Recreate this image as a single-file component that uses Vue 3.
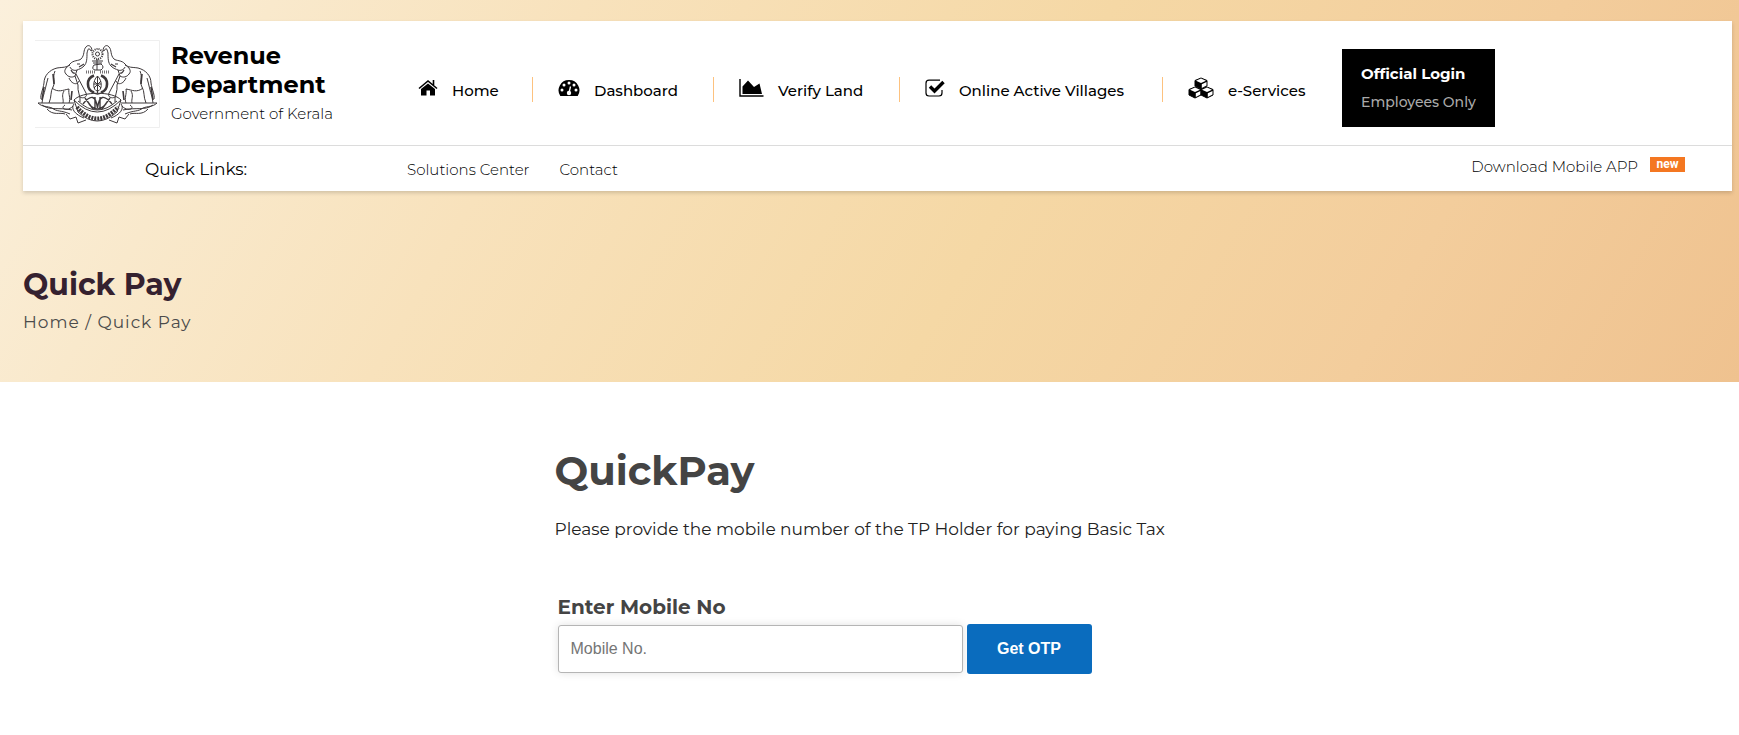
<script setup>
const navItems = [
  { icon: 'home', label: 'Home' },
  { icon: 'dashboard', label: 'Dashboard' },
  { icon: 'land', label: 'Verify Land' },
  { icon: 'villages', label: 'Online Active Villages' },
  { icon: 'services', label: 'e-Services' },
];
</script>

<template>
  <section class="hero">
    <header class="card">
      <div class="top">
        <a class="brand" href="#">
          <svg class="emblem" viewBox="0 0 125 88" fill="none" stroke="#3d383a" aria-hidden="true">
            <path d="M0 .5H124.500V87.500H0" stroke="#efefef" />
            <g id="elephant" stroke-width="1">
              <path d="M57 11C57 6 53 4 51 7C48 10 50 15 46 19C44 21 38 20 35 24C32 28 28 27 22 28C14 30 9 36 9 43C8 50 5 55 6 59M13 38C11 45 10 51 8 57L7 63" />
              <path d="M57 11L55 10C54 7 53 9 52 13C52 18 52 23 49 26C46 29 44 29 42 30L40 36C37 38 33 37 31 34C28 31 31 27 35 25M42 30C40 31 36 30 35 27" />
              <path d="M20 31C17 38 21 41 18 47C15 52 17 56 14 63M17 48C23 53 28 50 34 49C33 54 36 58 34 63M40 36L43 45C42 51 46 57 45 62M29 51C26 56 29 59 28 63M41 34L51 53C53 57 48 59 45 57M34 38C37 45 43 45 44 41" />
              <path d="M42 24h3M44 27l5-3M36 30q2 4 4 3" stroke-width="1.200" />
              <path d="M3 63H39M3 63C7 67 12 66 17 68C22 72 26 70 35 74M7 65C15 71 24 67 37 70M12 69C18 76 25 72 30 74M30 65C24 69 33 72 38 66M31 74L35 79L41 77L43 83L51 80M39 64C35 69 41 75 49 78" />
              <path d="M9 47L7 60M18 34L19 44M36 60L37 51" stroke-width="1.600" />
            </g>
            <use href="#elephant" transform="translate(125 0) scale(-1 1)" />
            <circle cx="62.500" cy="14" r="5" stroke-width="2" stroke-dasharray="1 1" />
            <circle cx="62.500" cy="14" r="2" />
            <path d="M57 21H68M58 23H67M59 25Q56 29 60 30H66Q70 27 66 24ZM62 19V30" />
            <path d="M51 32H61M65 32H75" stroke-width="3" stroke-dasharray="1 1" opacity=".7" />
            <path d="M59 35.500A9 9 0 0 0 59 52.500M66 35.500A9 9 0 0 1 66 52.500" stroke-width="2.600" />
            <path d="M59 53Q62.500 55 66 53" stroke-width="1.400" />
            <path d="M62.500 36C57 41 58 51 62.500 51C67 51 68 41 62.500 36V53M59 44H66M59 48L66 41M59 41L66 48" />
            <path d="M39 60C47 51 78 51 86 60M39 60Q62 84 86 60L82 72Q62 90 43 72ZM43 61Q62 79 82 61" />
            <path d="M42 67Q62 90 83 67" stroke-width="4" stroke-dasharray="2 1" />
            <path d="M48 64Q60 49 62.500 68Q65 49 77 64M54 64Q62 74 71 64M60 57V68M65 57V68M50 58L58 69M75 58L67 69" stroke-width="1.400" />
          </svg>
          <span class="brand-text">
            <strong>Revenue<br />Department</strong>
            <span>Government of Kerala</span>
          </span>
        </a>

        <nav class="nav" aria-label="Main">
          <a v-for="item in navItems" :key="item.icon" class="nav-item" href="#">
            <svg v-if="item.icon === 'home'" class="icon" viewBox="0 0 20 18" aria-hidden="true">
              <path d="M10 4.500L17 10V16.500H12V11.500H8.500V16.500H3V10Z" />
              <path d="M1 9.500L10 2L19 9.500M15.500 1V6" fill="none" stroke="#000" stroke-width="1.600" />
            </svg>
            <svg v-else-if="item.icon === 'dashboard'" class="icon" viewBox="0 0 22 18" aria-hidden="true">
              <path d="M11 1A10.300 10.300 0 0 0 2.300 17H19.700A10.300 10.300 0 0 0 11 1Z" />
              <g fill="#fff">
                <circle cx="11" cy="4" r="1.500" />
                <circle cx="6" cy="6" r="1.500" />
                <circle cx="16" cy="6" r="1.500" />
                <circle cx="4" cy="11" r="1.500" />
                <circle cx="18" cy="11" r="1.500" />
                <circle cx="11" cy="14" r="2.200" />
              </g>
              <path d="M11 14L12.500 7.500" stroke="#fff" stroke-width="1.300" />
            </svg>
            <svg v-else-if="item.icon === 'land'" class="icon" viewBox="0 0 25 18" aria-hidden="true">
              <path d="M1 0V17H24.500" fill="none" stroke="#000" stroke-width="1.400" />
              <path d="M3.500 15V7.500L9 1.500L15 8L20.500 4.500L23 15Z" />
            </svg>
            <svg v-else-if="item.icon === 'villages'" class="icon" viewBox="0 0 20 18" aria-hidden="true">
              <path d="M15 1.200H4A3 3 0 0 0 1 4.200V14A3 3 0 0 0 4 17H14A3 3 0 0 0 17 14V11" fill="none" stroke="#000" stroke-width="1.200" />
              <path d="M5 7.500L9.500 12L18.500 3" fill="none" stroke="#000" stroke-width="3.400" />
            </svg>
            <svg v-else class="icon icon-cubes" viewBox="0 0 26 22" aria-hidden="true">
              <g id="cube">
                <path d="M13 1L19 3.500V9L13 12L7 9V3.500Z" stroke="#000" />
                <path d="M13 1.500L18 3.700L13 6L8 3.700ZM13.800 7.300L18.500 5V8.600L13.800 11Z" fill="#fff" />
              </g>
              <use href="#cube" transform="translate(-6 9)" />
              <use href="#cube" transform="translate(6 9)" />
            </svg>
            <span>{{ item.label }}</span>
          </a>
        </nav>

        <a class="login" href="#">
          <strong>Official Login</strong>
          <span>Employees Only</span>
        </a>
      </div>

      <div class="quick">
        <span class="quick-title">Quick Links:</span>
        <nav class="quick-links" aria-label="Quick links">
          <a href="#">Solutions Center</a>
          <a href="#">Contact</a>
        </nav>
        <a class="download" href="#">
          Download Mobile APP
          <span class="badge">new</span>
        </a>
      </div>
    </header>

    <div class="heading">
      <h1>Quick Pay</h1>
      <p><a href="#">Home</a> / Quick Pay</p>
    </div>
  </section>

  <main class="content">
    <h2>QuickPay</h2>
    <p>Please provide the mobile number of the TP Holder for paying Basic Tax</p>
    <form class="form" @submit.prevent>
      <label for="mobile">Enter Mobile No</label>
      <div class="row">
        <input id="mobile" type="tel" placeholder="Mobile No." />
        <button type="submit">Get OTP</button>
      </div>
    </form>
  </main>
</template>

<style>
body {
  margin: 0;
  background: #fff;
}
</style>

<style scoped>
.hero,
.content {
  font-family: Montserrat, Inter, "Open Sans", sans-serif;
}
.hero,
.hero *,
.content * {
  box-sizing: border-box;
}
a {
  color: inherit;
  text-decoration: none;
}
.hero {
  padding: 21px 7px 48px 23px;
  background: linear-gradient(120deg, #fbf0dc 0%, #f9e9cc 14%, #f8e2bc 30%, #f5d8a5 57%, #f3cd9c 80%, #efc28f 100%);
}
.card {
  background: #fff;
  box-shadow: 0 2px 4px rgba(0, 0, 0, 0.16);
}
.top {
  display: flex;
  align-items: center;
  height: 124px;
  padding: 2px 0 0 12px;
}
.brand {
  display: flex;
  flex: 0 0 383px;
  gap: 11px;
  color: #000;
}
.emblem {
  width: 125px;
  height: 88px;
}
.brand-text {
  display: flex;
  flex-direction: column;
  padding-top: 1px;
  font-size: 15px;
  font-weight: 300;
  line-height: 29px;
}
.brand-text strong {
  font-size: 24px;
  font-weight: 700;
  line-height: 29px;
}
.nav {
  display: grid;
  grid-template-columns: 114px 181px 186px 263px 180px;
  padding-top: 10px;
}
.nav-item {
  display: flex;
  align-items: center;
  height: 25px;
  padding-top: 2px;
  gap: 14px;
  color: #000;
  font-size: 15px;
  font-weight: 500;
  white-space: nowrap;
}
.nav-item + .nav-item {
  padding-left: 25px;
  border-left: 1px solid #fdc27f;
}
.icon {
  height: 18px;
  margin-bottom: 4px;
}
.icon-cubes {
  height: 22px;
}
.login {
  display: flex;
  flex-direction: column;
  margin-top: 8px;
  padding: 10px 19px;
  background: #000;
  color: #aaa;
  font-size: 14px;
  font-weight: 500;
  line-height: 29px;
  white-space: nowrap;
}
.login strong {
  color: #fff;
  font-size: 15px;
  font-weight: 700;
}
.quick {
  display: flex;
  align-items: center;
  height: 46px;
  padding: 0 47px 0 122px;
  border-top: 1px solid #dcdcdc;
  color: #000;
  font-size: 15px;
}
.quick-title {
  flex: 0 0 262px;
  font-size: 17px;
}
.quick-links {
  display: flex;
  flex: 1;
  gap: 30px;
  padding-top: 2px;
  font-weight: 300;
}
.download {
  display: flex;
  align-items: center;
  gap: 12px;
  padding-bottom: 4px;
  font-weight: 300;
}
.badge {
  width: 35px;
  height: 15px;
  margin-bottom: 4px;
  background: #f47721;
  color: #fff;
  font: 700 12px/14px Roboto, "Liberation Sans", sans-serif;
  text-align: center;
}
.heading {
  padding-top: 74px;
}
.heading h1 {
  margin: 0;
  color: #35212f;
  font-size: 30px;
  font-weight: 700;
  line-height: 40px;
}
.heading p {
  margin: 0;
  padding-top: 5px;
  color: #4b4b4b;
  font-size: 17px;
  letter-spacing: 1px;
  line-height: 24px;
}
.content {
  width: 630px;
  margin: 0 auto;
  padding: 64px 0 60px;
}
.content h2 {
  margin: 0;
  color: #444;
  font-size: 40px;
  font-weight: 700;
  line-height: 50px;
}
.content p {
  margin: 21px 0 0;
  color: #222;
  font-size: 17px;
  line-height: 24px;
}
.form {
  padding: 51px 3px 0;
}
.form label {
  display: block;
  color: #444;
  font-size: 20px;
  font-weight: 700;
  line-height: 30px;
}
.row {
  display: flex;
  align-items: center;
  gap: 4px;
  margin-top: 2px;
}
.row input {
  width: 405px;
  height: 48px;
  padding: 0 12px;
  border: 1px solid #b5b5b5;
  border-radius: 3px;
  box-shadow: 0 0 8px rgba(0, 0, 0, 0.12);
  font: 16px "Liberation Sans", Arial, sans-serif;
}
.row input::placeholder {
  color: #757575;
}
.row button {
  width: 125px;
  height: 50px;
  border: 0;
  border-radius: 3px;
  background: #0a6cbe;
  color: #fff;
  font: 700 16px "Liberation Sans", Arial, sans-serif;
}
</style>
